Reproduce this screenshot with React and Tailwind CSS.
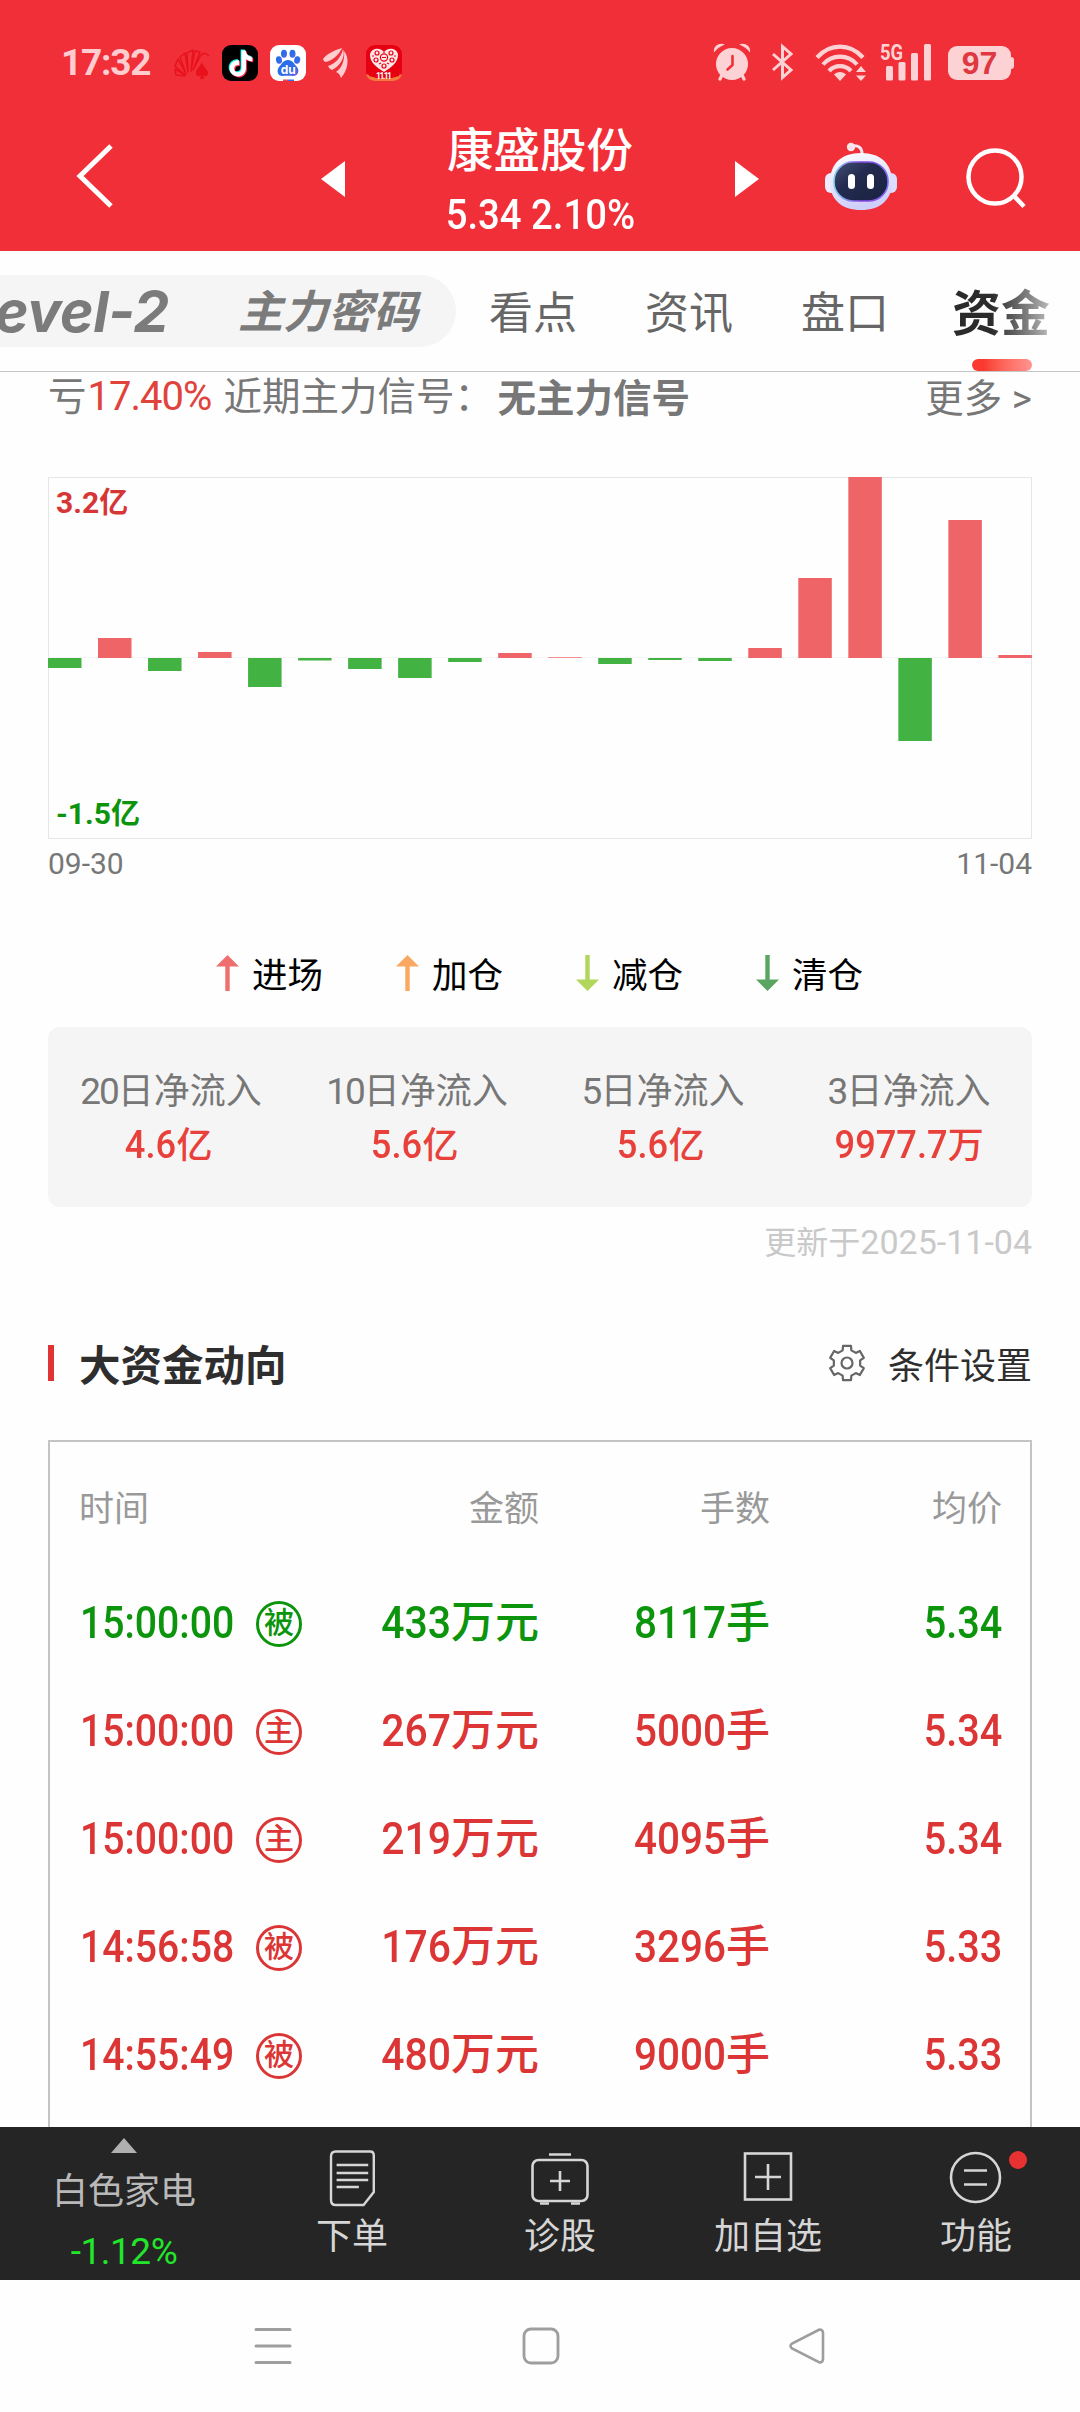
import React from "react";
import { SiTiktok } from "react-icons/si";

const RED = "text-[#dc3535]";
const GREEN = "text-[#0c940c]";

// net inflow per trading day, in px from the zero line
const flows = [-10, 20, -13, 6, -29, -2.5, -11, -20, -4, 5, 0.7, -6, -2, -3, 10, 80, 181, -83, 138, 3];

const legend = [
  { name: "进场", color: "#ef6e6e", up: true },
  { name: "加仓", color: "#faa861", up: true },
  { name: "减仓", color: "#b0d65b", up: false },
  { name: "清仓", color: "#5aa562", up: false },
];

const inflows = [
  { days: "20", value: "4.6", unit: "亿" },
  { days: "10", value: "5.6", unit: "亿" },
  { days: "5", value: "5.6", unit: "亿" },
  { days: "3", value: "9977.7", unit: "万" },
];

const trades = [
  { time: "15:00:00", tag: "被", amount: "433", lots: "8117", price: "5.34", color: GREEN },
  { time: "15:00:00", tag: "主", amount: "267", lots: "5000", price: "5.34", color: RED },
  { time: "15:00:00", tag: "主", amount: "219", lots: "4095", price: "5.34", color: RED },
  { time: "14:56:58", tag: "被", amount: "176", lots: "3296", price: "5.33", color: RED },
  { time: "14:55:49", tag: "被", amount: "480", lots: "9000", price: "5.33", color: RED },
];

// fan of petals with a small spade in front
function HuaweiIcon() {
  return (
    <svg className="w-9 h-9" viewBox="0 0 36 36" fill="none" stroke="#e9121c" strokeWidth="1.5" strokeLinejoin="round">
      <path d="M11 31L2 30 1 24 11 30 1 21 4 14 12 29 6 12 11 8 14 27 13 8 19 5 17 26 21 6 26 7 19 25 27 10 31 8 35 11" />
      <path d="M28 17c1 5 7 8 6 12-1 3-4 3-5 1l1 4h-4l1-4c-1 2-5 2-5-2 0-4 4-6 6-11z" fill="#e9121c" stroke="none" />
    </svg>
  );
}

function TiktokIcon() {
  return (
    <div className="relative w-9 h-9 rounded-[9px] bg-black">
      <SiTiktok className="absolute left-[5px] top-[4px] w-[26px] h-[27px] text-[#25f4ee]" />
      <SiTiktok className="absolute left-[7px] top-[6px] w-[26px] h-[27px] text-[#fe2c55]" />
      <SiTiktok className="absolute left-[6px] top-[5px] w-[26px] h-[27px] text-white" />
    </div>
  );
}

function BaiduIcon() {
  return (
    <svg className="w-9 h-9" viewBox="0 0 36 36">
      <defs>
        <linearGradient id="paw" x1="0" y1="0" x2="1" y2="1">
          <stop offset="0" stopColor="#1b6fe8" />
          <stop offset="0.7" stopColor="#3a6be8" />
          <stop offset="1" stopColor="#8a55e0" />
        </linearGradient>
      </defs>
      <rect width="36" height="36" rx="9" fill="#fff" />
      <g fill="url(#paw)">
        <ellipse cx="9" cy="15" rx="3" ry="3.8" transform="rotate(-12 9 15)" />
        <ellipse cx="14" cy="8.7" rx="3" ry="4" />
        <ellipse cx="22.5" cy="8.7" rx="3" ry="4" />
        <ellipse cx="27.2" cy="15" rx="3" ry="3.8" transform="rotate(12 27.2 15)" />
        <path d="M18 15c5 0 6 4 9 7 3 4 1 9-4 9-3 0-7-.5-10 0-5 .5-7-5-4-9 3-3 4-7 9-7z" />
      </g>
      <text x="18.2" y="28.5" textAnchor="middle" fontSize="12" fontWeight="700" fill="#fff" fontFamily="Inter, sans-serif">du</text>
      <path d="M13 34.5h5V36h-5z" fill="#e04a5a" />
      <path d="M18 34.5h6V36h-6z" fill="#3a6be8" />
    </svg>
  );
}

function FeatherIcon() {
  return (
    <svg className="w-9 h-9" viewBox="0 0 36 36" fill="#ffcdd0">
      <path d="M5 14C11 7 18 5 24 3 21 10 14 16 7 17c-1-1-2-2-2-3z" />
      <path d="M10 21c7-2 13-8 15-17 3 8-3 17-11 21-2-1-3-2-4-4z" />
      <path d="M18 27c6-4 9-12 8-21 6 7 4 19-3 27-1-3-2-5-5-6z" />
    </svg>
  );
}

function SaleIcon() {
  return (
    <svg className="w-9 h-9" viewBox="0 0 36 36">
      <rect width="36" height="36" rx="9" fill="#e60012" />
      <path d="M0 29q18 7 36 0q-2 7-9 7H9q-7 0-9-7z" fill="#f5793c" />
      <path d="M3 27q15 6 30 0v4q-15 5-30 0z" fill="#e60012" />
      <path d="M18 27C10 22 4 17 4 10c0-6 9-9 14-3 5-6 14-3 14 3 0 7-6 12-14 17z" fill="#fde8e8" />
      <g fill="none" stroke="#e60012" strokeWidth="1.2">
        <circle cx="11" cy="8" r="2" />
        <circle cx="25" cy="8" r="2" />
        <circle cx="18" cy="12.5" r="3.6" />
        <circle cx="10" cy="15" r="2" />
        <circle cx="26" cy="15" r="2" />
        <circle cx="18" cy="21" r="2" />
        <path d="M16 12.5h4M13 19l2-1M23 19l-2-1M18 7v1M6 11h2M28 11h2" />
      </g>
      <text x="18" y="34" textAnchor="middle" fontSize="8.5" fontWeight="700" textLength="16" fill="#fff" fontFamily="Roboto, sans-serif">11.11</text>
    </svg>
  );
}

function AlarmIcon() {
  return (
    <svg className="w-[38px] h-[38px]" viewBox="0 0 38 38">
      <g stroke="#fdd2d4" strokeWidth="3.2" strokeLinecap="round" fill="none">
        <path d="M9 32l-2 4M29 32l2 4" />
      </g>
      <path d="M1 9.5C0 3 6-1 12 1.500Q5 4 1 9.500zM37 9.500c1-6.500-5-10.500-11-8q7 2.500 11 8z" fill="#fdd2d4" />
      <circle cx="19" cy="21" r="16" fill="#fdd2d4" />
      <path d="M19.500 13v9l-5 4.500" stroke="#f02f38" strokeWidth="2.6" strokeLinecap="round" fill="none" />
    </svg>
  );
}

function WifiIcon() {
  return (
    <svg className="w-[52px] h-[37px]" viewBox="0 0 52 37">
      <g stroke="#fdd2d4" strokeWidth="4.2" fill="none">
        <path d="M2 13.5C15-1 35-1 48 13.500" />
        <path d="M8 20.500c9-10.500 25-10.500 34 0" />
        <path d="M14 27c6-6.500 16-6.500 22 0" />
      </g>
      <path d="M25 37l-6-6.500c3-3.500 9-3.500 12 0zM41 28l5-6 5 6zM41 31.500h10l-5 5.500z" fill="#fdd2d4" />
    </svg>
  );
}

function SignalIcon() {
  return (
    <svg className="w-[54px] h-[38px] overflow-visible" viewBox="0 0 54 38" fill="#fdd2d4">
      <text x="0" y="17" fontSize="22" fontWeight="700" textLength="23" lengthAdjust="spacingAndGlyphs" fontFamily="Roboto, sans-serif">5G</text>
      <rect x="6" y="23" width="7" height="14.5" rx="1.5" />
      <rect x="18.5" y="19" width="7" height="18.5" rx="1.5" />
      <rect x="31" y="10" width="7" height="27.5" rx="1.5" />
      <rect x="44" y="1" width="7" height="36.5" rx="1.5" />
    </svg>
  );
}

function StatusBar() {
  return (
    <div className="flex items-center h-[124px] pl-[61px] pr-[66px]">
      <span className="w-[113px] text-[37px] leading-none font-bold tracking-[-1.2px] text-[#ffcdd0]">17:32</span>
      <div className="flex items-center gap-3 pt-[2px]">
        <HuaweiIcon />
        <TiktokIcon />
        <BaiduIcon />
        <FeatherIcon />
        <SaleIcon />
      </div>
      <div className="flex items-center ml-auto">
        <AlarmIcon />
        <svg className="w-6 h-[38px] ml-5" viewBox="0 0 24 38" fill="none" stroke="#fdd2d4" strokeWidth="3">
          <path d="M2 11l18 16-8.500 7.500V3.500L20 11 2 27" />
        </svg>
        <div className="ml-[20px]"><WifiIcon /></div>
        <div className="ml-[13px]"><SignalIcon /></div>
        <div className="flex items-center ml-[14px] pt-[2px]">
          <div className="flex items-center justify-center w-[63px] h-[34px] rounded-[9px] bg-[#fdd2d4] text-[32px] leading-none font-bold text-[#e03840] font-['Liberation_Sans',sans-serif]">97</div>
          <div className="w-[3px] h-3 rounded-r-sm bg-[#fdd2d4]" />
        </div>
      </div>
    </div>
  );
}

function RobotIcon() {
  return (
    <svg className="w-[74px] h-[68px]" viewBox="0 0 74 68">
      <defs>
        <linearGradient id="shell" x1="0" y1="0" x2="0.3" y2="1">
          <stop offset="0" stopColor="#ffffff" />
          <stop offset="1" stopColor="#cfcffb" />
        </linearGradient>
        <linearGradient id="visor" x1="0" y1="0" x2="1" y2="1">
          <stop offset="0" stopColor="#465074" />
          <stop offset="0.4" stopColor="#232c50" />
          <stop offset="1" stopColor="#1a2140" />
        </linearGradient>
        <linearGradient id="rim" x1="0" y1="0" x2="1" y2="0">
          <stop offset="0" stopColor="#7fd0f0" />
          <stop offset="0.5" stopColor="#8b45e6" />
          <stop offset="1" stopColor="#7c6cf0" />
        </linearGradient>
      </defs>
      <path d="M28 4c7-1 10 2 10 8" stroke="#f0e6f6" strokeWidth="3" fill="none" />
      <circle cx="27" cy="5" r="4.2" fill="#fbe3ea" />
      <rect x="1" y="31" width="14" height="20" rx="6" fill="#ecebff" />
      <rect x="59" y="31" width="14" height="20" rx="6" fill="#dcdcff" />
      <path d="M37 11c20 0 31 11 31 29S56 68 37 68 6 58 6 40s11-29 31-29z" fill="url(#shell)" />
      <rect x="10" y="20" width="54" height="39" rx="19" fill="url(#visor)" stroke="url(#rim)" strokeWidth="1.6" />
      <rect x="24" y="32" width="7" height="15" rx="3.5" fill="#fff" />
      <rect x="43" y="32" width="7" height="15" rx="3.5" fill="#fff" />
    </svg>
  );
}

function TitleBar() {
  return (
    <div className="flex items-center h-[127px] pb-[24px] pl-[75px] pr-[53px] text-white">
      <svg className="w-10 h-[66px]" viewBox="0 0 40 66" fill="none" stroke="#fff" strokeWidth="5">
        <path d="M36 3L5 33l31 30" />
      </svg>
      <svg className="w-6 h-9 ml-[206px] mt-[6px]" viewBox="0 0 24 36" fill="#fff"><path d="M24 0v36L0 18z" /></svg>
      <div className="flex flex-col items-center w-[390px] mt-1">
        <span className="text-[46.5px] leading-[60px] font-medium">康盛股份</span>
        <span className="text-[43px] leading-[42px] mt-[12px] font-medium scale-x-[0.89] whitespace-nowrap">5.34 2.10%</span>
      </div>
      <svg className="w-6 h-9 mt-[6px]" viewBox="0 0 24 36" fill="#fff"><path d="M0 0v36l24-18z" /></svg>
      <div className="ml-[65px] mt-[1px]"><RobotIcon /></div>
      <svg className="w-[62px] h-[62px] ml-auto mt-[4px]" viewBox="0 0 62 62" fill="none" stroke="#fff" strokeWidth="4.5">
        <circle cx="30" cy="30" r="26.5" />
        <path d="M49 49l10 10.500" />
      </svg>
    </div>
  );
}

function Tabs() {
  return (
    <div className="flex items-center w-[1080px] h-[121px] border-b border-[#c6c6c6] overflow-hidden text-[44px] leading-[60px] text-[#666]">
      <div className="flex items-center flex-none w-[456px] h-[72px] rounded-r-full bg-[#f5f5f5] font-bold italic text-[#7b7b7b]">
        <span className="-ml-[5px] w-[243px] pt-[2px] text-[57px] tracking-[-0.4px] font-['Inter',sans-serif]">evel-2</span>
        <span className="pt-[4px] text-[45px]">主力密码</span>
      </div>
      <span className="flex-none w-[156px] ml-[33px] pt-[6px]">看点</span>
      <span className="flex-none w-[156px] pt-[6px]">资讯</span>
      <span className="flex-none w-[151px] pt-[6px]">盘口</span>
      <div className="relative flex-none pt-[8px]">
        <span className="text-[49px] font-bold bg-gradient-to-r from-[#2b2b2b] from-40% to-[#bbb] bg-clip-text text-transparent">资金</span>
        <div className="absolute left-5 top-[82px] w-[60px] h-3 rounded-full bg-gradient-to-r from-[#fa3a30] from-20% to-[#ff9490]" />
      </div>
    </div>
  );
}

function Signal() {
  return (
    <div className="flex items-center h-[48px] pt-[2px] px-12 text-[38.5px] leading-[48px] text-[#777] whitespace-nowrap">
      <span>亏</span>
      <span className="w-[137px] text-[40px] tracking-[-1px] text-[#e0433b] pl-[1px]">17.40%</span>
      <span className="w-[274px]">近期主力信号：</span>
      <span className="pt-1 font-bold">无主力信号</span>
      <span className="ml-auto pt-1">更多 &gt;</span>
    </div>
  );
}

function FlowChart() {
  return (
    <div className="mx-12 mt-[57px]">
      <div className="relative h-[363px] text-[30px] leading-[40px] font-bold">
        <svg className="block w-[984px] h-[363px]" viewBox="0 0 984 363">
          <rect x="0.5" y="0.5" width="983" height="361" fill="none" stroke="#e6e6e6" />
          <path d="M0 180.500h984" stroke="#f5f5f5" />
          {flows.map((v, i) => (
            <rect key={i} x={i * 50.02} y={v > 0 ? 181 - v : 181} width="33.5" height={Math.abs(v)} fill={v > 0 ? "#ef6466" : "#42b242"} />
          ))}
        </svg>
        <span className="absolute left-[8px] top-[6px] text-[#d63636]">3.2<span className="text-[29px]">亿</span></span>
        <span className="absolute left-[8px] top-[317px] text-[#0c940c]">-1.5<span className="text-[29px]">亿</span></span>
      </div>
      <div className="flex justify-between mt-1 text-[30px] leading-[40px] text-[#777]">
        <span>09-30</span>
        <span>11-04</span>
      </div>
    </div>
  );
}

function Legend() {
  return (
    <div className="flex mt-[66px] ml-[216px]">
      {legend.map(item => (
        <div className="flex items-center w-[180px] h-[50px]" key={item.name}>
          <svg className="w-[23px] h-9 mr-[13px] mb-[5px]" viewBox="0 0 23 36" fill={item.color}>
            <path d={item.up ? "M11.500 0L23 11.500h-9.300V36H9.300V11.500H0z" : "M11.500 36L23 24.500h-9.300V0H9.300v24.500H0z"} />
          </svg>
          <span className="text-[35.5px] leading-[50px] pt-[1px] text-black">{item.name}</span>
        </div>
      ))}
    </div>
  );
}

function InflowCard() {
  return (
    <div className="mx-12 mt-[27px]">
      <div className="grid grid-cols-4 h-[180px] pt-[40px] rounded-xl bg-[#f5f5f5] text-center text-[36px] leading-[50px]">
        {inflows.map(item => (
          <div key={item.days}>
            <div className="text-[#777]"><span className="text-[37px] tracking-[-2px]">{item.days}</span>日净流入</div>
            <div className="mt-[3px] font-medium text-[#e8403a]">
              <span className="inline-block -ml-[8px] text-[39px] origin-right scale-x-[0.93]">{item.value}</span>{item.unit}
            </div>
          </div>
        ))}
      </div>
      <div className="mt-[10px] text-right text-[32px] leading-[50px] text-[#c9c9c9]">更新于<span className="text-[34px]">2025-11-04</span></div>
    </div>
  );
}

// six-toothed outline around (19, 19)
function gearPath() {
  const pts = [];
  for (let i = 0; i < 6; i++) {
    const a = i * 60 - 90;
    [[13.4, -19], [17.6, -13], [17.6, 13], [13.4, 19]].forEach(([r, d]) => {
      const t = ((a + d) * Math.PI) / 180;
      pts.push(`${(19 + r * Math.cos(t)).toFixed(2)} ${(19 + r * Math.sin(t)).toFixed(2)}`);
    });
  }
  return `M${pts.join("L")}Z`;
}

function SectionHeader() {
  return (
    <div className="flex items-center h-[60px] mx-12 mt-[66px]">
      <div className="w-[6px] h-9 mb-[2px] bg-[#e03434]" />
      <span className="ml-[25px] pt-[5px] text-[41.5px] leading-[60px] font-bold text-[#2e2e2e]">大资金动向</span>
      <svg className="w-[38px] h-[38px] ml-auto mb-[2px]" viewBox="0 0 38 38" fill="none" stroke="#666" strokeWidth="2.2" strokeLinejoin="round">
        <path d={gearPath()} />
        <circle cx="19" cy="19" r="5.5" />
      </svg>
      <span className="ml-[22px] pt-[5px] text-[36px] leading-[60px] text-[#2e2e2e]">条件设置</span>
    </div>
  );
}

function TradeTable() {
  const cols = "grid grid-cols-[217px_243px_231px_232px] pl-[29px]";
  return (
    <div className="flex-1 mx-12 mt-[46px] pt-[38px] border-2 border-b-0 border-[#c4c4c4] overflow-hidden">
      <div className={`${cols} text-[35px] leading-[60px] text-[#999]`}>
        <span>时间</span>
        <span className="text-right">金额</span>
        <span className="text-right">手数</span>
        <span className="text-right">均价</span>
      </div>
      <div className="pt-[29px]">
        {trades.map((t, i) => (
          <div className={`${cols} h-[108px] items-center text-[44px] leading-[60px] font-medium ${t.color}`} key={i}>
            <div className="flex items-center">
              <span className="flex-none w-[176px] ml-[1px] origin-left scale-x-[0.89]">{t.time}</span>
              <span className="flex flex-none items-center justify-center w-[46px] h-[46px] mt-[2px] rounded-full border-3 border-current text-[30px] leading-none"><span className="-mt-[3px]">{t.tag}</span></span>
            </div>
            <span className="text-right"><span className="inline-block origin-right scale-x-[0.93]">{t.amount}</span>万元</span>
            <span className="text-right"><span className="inline-block origin-right scale-x-[0.92]">{t.lots}</span>手</span>
            <span className="text-right"><span className="inline-block origin-right scale-x-[0.9]">{t.price}</span></span>
          </div>
        ))}
      </div>
    </div>
  );
}

function Action({ name, children }) {
  return (
    <div className="relative flex flex-col items-center w-52 pt-[20px]">
      <svg className="w-[60px] h-[60px] overflow-visible" viewBox="0 0 60 60" fill="none" stroke="#d6d6d6" strokeWidth="2.6">{children}</svg>
      <span className="mt-[5px] text-[36px] leading-[50px] text-[#d6d6d6]">{name}</span>
    </div>
  );
}

function BottomBar() {
  return (
    <div className="flex flex-none h-[153px] bg-[#252525]">
      <div className="flex flex-col items-center w-[248px] pt-[11px]">
        <svg className="w-[26px] h-[15px]" viewBox="0 0 26 15" fill="#b0b0b0"><path d="M13 0l13 15H0z" /></svg>
        <span className="mt-[14px] text-[36px] leading-[50px] text-[#b9b9b9]">白色家电</span>
        <span className="mt-[10px] text-[37px] leading-[50px] tracking-[-0.5px] text-[#22e62a]">-1.12%</span>
      </div>
      <Action name="下单">
        <path d="M12 4.500h37q4 0 4 4V45L42 58H12q-5 0-5-5V9.500q0-5 5-5zM13 18h34M13 26h34M13 33h34M13 40h24" transform="translate(2.5) scale(.93 1)" />
      </Action>
      <Action name="诊股">
        <rect x="2.5" y="13" width="55" height="41" rx="6" />
        <path d="M19 7.500h22M30 24v20M20 34h20M10 56.500h9M41 56.500h9" />
      </Action>
      <Action name="加自选">
        <rect x="7" y="6.5" width="46" height="46" />
        <path d="M30 17v26M17 30h26" />
      </Action>
      <Action name="功能">
        <circle cx="29.5" cy="30.5" r="24.5" />
        <path d="M18 23.500h23M18 37.500h23" />
        <circle cx="72" cy="13" r="9" fill="#e83232" stroke="none" />
      </Action>
    </div>
  );
}

function SystemNav() {
  return (
    <div className="flex flex-none items-center h-[132px] pl-[253px]">
      <svg className="w-10 h-10" viewBox="0 0 40 40" fill="none" stroke="#9e9e9e" strokeWidth="3" strokeLinecap="round">
        <path d="M3 3.500h34M3 20h34M3 36.500h34" />
      </svg>
      <svg className="w-10 h-10 ml-[228px]" viewBox="0 0 40 40" fill="none" stroke="#9e9e9e" strokeWidth="2.8">
        <rect x="3" y="3" width="34" height="34" rx="7" />
      </svg>
      <svg className="w-10 h-10 ml-[226px]" viewBox="0 0 40 40" fill="none" stroke="#9e9e9e" strokeWidth="2.6">
        <path d="M32.500 3.500L5 17.500q-3 2.500 0 5L32.500 36.500q3.500 0 3.500-3.500V7q0-3.500-3.500-3.500z" />
      </svg>
    </div>
  );
}

export default function App() {
  return (
    <div className="flex flex-col w-[1080px] h-[2412px] overflow-hidden bg-[#fefefe] font-['Roboto','Noto_Sans_CJK_SC',sans-serif]" lang="zh-CN">
      <div className="flex-none h-[251px] bg-[#f12f38]">
        <StatusBar />
        <TitleBar />
      </div>
      <Tabs />
      <Signal />
      <FlowChart />
      <Legend />
      <InflowCard />
      <SectionHeader />
      <TradeTable />
      <BottomBar />
      <SystemNav />
    </div>
  );
}
